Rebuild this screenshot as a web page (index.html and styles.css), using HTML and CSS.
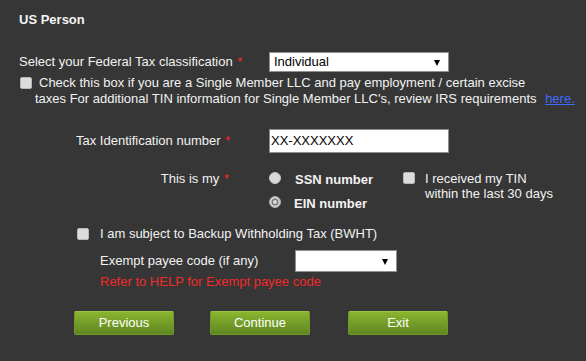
FILE: index.html
```html
<!DOCTYPE html>
<html>
<head>
<meta charset="utf-8">
<link rel="stylesheet" href="styles.css">
</head>
<body>
<div class="page">
  <h1 class="title">US Person</h1>

  <div class="row row-class">
    <div class="label label-class">Select your Federal Tax classification <span class="req">*</span></div>
    <div class="select select-class"><span>Individual</span><span class="arrow"></span></div>
  </div>

  <div class="row row-llc">
    <span class="checkbox cb-llc"></span>
    <div class="llc-text">Check this box if you are a Single Member LLC and pay employment / certain excise<br>taxes For additional TIN information for Single Member LLC's, review IRS requirements <a class="link" href="#">here.</a></div>
  </div>

  <div class="row row-tin">
    <div class="label label-tin">Tax Identification number <span class="req">*</span></div>
    <div class="input">XX-XXXXXXX</div>
  </div>

  <div class="row row-type">
    <div class="label label-type">This is my <span class="req">*</span></div>
    <div class="radios">
      <div class="radio-item"><span class="radio"></span><span class="radio-label">SSN number</span></div>
      <div class="radio-item radio-item-2"><span class="radio checked"></span><span class="radio-label">EIN number</span></div>
    </div>
    <div class="recent">
      <span class="checkbox"></span>
      <div class="recent-text">I received my TIN<br>within the last 30 days</div>
    </div>
  </div>

  <div class="row row-bwht">
    <span class="checkbox"></span>
    <span class="bwht-text">I am subject to Backup Withholding Tax (BWHT)</span>
  </div>

  <div class="row row-exempt">
    <div class="label label-exempt">Exempt payee code (if any)</div>
    <div class="select select-exempt"><span></span><span class="arrow"></span></div>
  </div>

  <div class="help">Refer to HELP for Exempt payee code</div>

  <div class="buttons">
    <button class="btn">Previous</button>
    <button class="btn">Continue</button>
    <button class="btn btn-exit">Exit</button>
  </div>
</div>
</body>
</html>
```

FILE: styles.css
```css
html, body {
  margin: 0;
  padding: 0;
  background: #363636;
}
body {
  font-family: "Liberation Sans", Arial, sans-serif;
  font-size: 13px;
  color: #f2f2f2;
  width: 586px;
  height: 361px;
  overflow: hidden;
}
.page {
  padding-top: 12px;
}
.title {
  margin: 0;
  padding-left: 19px;
  font-size: 13px;
  font-weight: bold;
  line-height: 16px;
  color: #f4f4f4;
}
.row {
  display: flex;
  align-items: center;
}
.label {
  line-height: 16px;
}
.req {
  color: #ff2626;
  margin-left: 1px;
}
.row-class {
  margin-top: 24px;
  padding-left: 19px;
  height: 20px;
}
.label-class {
  width: 250px;
}
.select {
  box-sizing: border-box;
  background: #fff;
  border: 1px solid #8f8f8f;
  color: #000;
  display: flex;
  align-items: center;
  justify-content: space-between;
  padding-left: 4px;
  padding-right: 8px;
  line-height: 16px;
}
.select-class {
  width: 180px;
  height: 20px;
}
.arrow {
  width: 0;
  height: 0;
  border-left: 3.5px solid transparent;
  border-right: 3.5px solid transparent;
  border-top: 6px solid #000;
  margin-top: 1px;
}
.checkbox {
  box-sizing: border-box;
  display: inline-block;
  width: 12px;
  height: 12px;
  background: #dcdcdc;
  border: 1px solid #b8b8b8;
  border-radius: 2px;
  flex: none;
}
.row-llc {
  margin-top: 3px;
  align-items: flex-start;
  padding-left: 20px;
}
.cb-llc {
  margin-top: 2px;
}
.llc-text {
  margin-left: 3px;
  text-indent: 4px;
  line-height: 16px;
}
.link {
  color: #3c6cff;
  text-decoration: underline;
  margin-left: 5px;
}
.row-tin {
  margin-top: 22px;
  padding-left: 76px;
  height: 24px;
}
.label-tin {
  width: 193px;
}
.input {
  box-sizing: border-box;
  width: 180px;
  height: 24px;
  background: #fff;
  border: 1px solid #8f8f8f;
  color: #000;
  padding-left: 1px;
  line-height: 22px;
}
.row-type {
  margin-top: 18px;
  align-items: flex-start;
}
.label-type {
  width: 229px;
  text-align: right;
}
.radios {
  margin-left: 40px;
  width: 134px;
}
.radio-item {
  display: flex;
  align-items: center;
  height: 16px;
}
.radio-item-2 {
  margin-top: 8px;
}
.radio {
  box-sizing: border-box;
  width: 12px;
  height: 12px;
  border-radius: 50%;
  background: #dadada;
  border: 1px solid #c4c4c4;
  flex: none;
  margin-top: -2px;
}
.radio.checked {
  background: #dadada;
  border: 1px solid #b0b0b0;
  box-shadow: inset 0 0 0 1.5px #dadada, inset 0 0 0 3px #7a7a7a;
}
.radio-label {
  font-weight: bold;
  margin-left: 14px;
}
.radio-item-2 .radio-label {
  margin-left: 13px;
}
.recent {
  display: flex;
  align-items: flex-start;
}
.recent .checkbox {
  margin-top: 1px;
}
.recent-text {
  margin-left: 10px;
  line-height: 15px;
}
.row-bwht {
  margin-top: 15px;
  padding-left: 77px;
  height: 16px;
}
.bwht-text {
  margin-left: 11px;
  line-height: 16px;
}
.row-exempt {
  margin-top: 8px;
  padding-left: 100px;
  height: 22px;
}
.label-exempt {
  width: 195px;
}
.select-exempt {
  width: 102px;
  height: 22px;
}
.help {
  margin-top: 2px;
  padding-left: 100px;
  line-height: 16px;
  color: #f22a2a;
}
.buttons {
  margin-top: 21px;
  padding-left: 74px;
  display: flex;
  gap: 36px;
}
.btn {
  box-sizing: border-box;
  width: 100px;
  height: 24px;
  border: 1px solid #6e9a2a;
  border-top-color: #9cc24a;
  border-radius: 2px;
  background: linear-gradient(#8ab52f, #5f8621);
  color: #fff;
  font-family: "Liberation Sans", Arial, sans-serif;
  font-size: 13px;
  padding: 0;
  line-height: 22px;
}
.btn-exit {
  margin-left: 2px;
}
```
